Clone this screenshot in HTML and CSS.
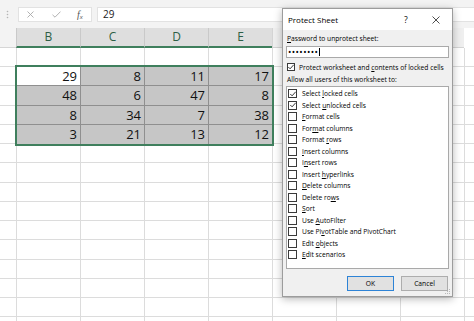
FILE: index.html
```html
<!DOCTYPE html>
<html lang="en">
  <head>
    <meta charset="UTF-8" />
    <title>Protect Sheet</title>
    <link rel="stylesheet" href="styles.css">
  </head>
  <body>
    <main class="excel">
      <!-- formula bar -->
      <div class="formula-bar">
        <span class="grip">
          <svg width="3" height="9" viewBox="0 0 3 9"><circle cx="1.5" cy="1.5" r="0.8" fill="#b5b5b5"/><circle cx="1.5" cy="4.5" r="0.8" fill="#b5b5b5"/><circle cx="1.5" cy="7.5" r="0.8" fill="#b5b5b5"/></svg>
        </span>
        <div class="fx-box">
          <svg class="fx-cancel" width="7" height="7" viewBox="0 0 7 7"><path d="M0.5 0.5 L6.5 6.5 M6.5 0.5 L0.5 6.5" stroke="#a9a9a9" stroke-width="0.9" fill="none"/></svg>
          <svg class="fx-enter" width="9" height="7" viewBox="0 0 9 7"><path d="M0.5 3.8 L3 6.2 L8.5 0.6" stroke="#a9a9a9" stroke-width="0.9" fill="none"/></svg>
          <span class="fx-label"><i>f</i><span class="fx-x">x</span></span>
        </div>
        <div class="formula-input">29</div>
      </div>

      <!-- column headers -->
      <div class="col-heads">
        <div class="corner"></div>
        <div class="col-head selected">B</div>
        <div class="col-head selected">C</div>
        <div class="col-head selected">D</div>
        <div class="col-head selected">E</div>
        <div class="col-head">F</div>
        <div class="col-head">G</div>
        <div class="col-head">H</div>
      </div>

      <!-- cells -->
      <div class="cells">
        <div class="selection">
          <div class="cell active">29</div>
          <div class="cell">8</div>
          <div class="cell">11</div>
          <div class="cell">17</div>
          <div class="cell">48</div>
          <div class="cell">6</div>
          <div class="cell">47</div>
          <div class="cell">8</div>
          <div class="cell">8</div>
          <div class="cell">34</div>
          <div class="cell">7</div>
          <div class="cell">38</div>
          <div class="cell">3</div>
          <div class="cell">21</div>
          <div class="cell">13</div>
          <div class="cell">12</div>
        </div>
      </div>
    </main>

    <section class="dialog" role="dialog" aria-label="Protect Sheet">
      <div class="dialog-title">
        <span class="title-text">Protect Sheet</span>
        <span class="title-help">?</span>
        <svg class="title-close" width="8" height="8" viewBox="0 0 8 8"><path d="M0.5 0.5 L7.5 7.5 M7.5 0.5 L0.5 7.5" stroke="#222" stroke-width="0.8" fill="none"/></svg>
      </div>
      <div class="dialog-body">
        <div class="field-label"><u>P</u>assword to unprotect sheet:</div>
        <div class="password"><span class="dots">••••••••</span><span class="caret"></span></div>
        <label class="check-row">
          <span class="box checked"><svg width="8" height="8" viewBox="0 0 8 8"><path d="M1.3 4 L3.1 5.8 L6.7 1.8" stroke="#222" stroke-width="0.9" fill="none"/></svg></span>
          <span>Protect worksheet and <u>c</u>ontents of locked cells</span>
        </label>
        <div class="field-label allow">Allow all users of this worksheet to:</div>
        <ul class="perm-list">
          <li><span class="box checked"><svg width="8" height="8" viewBox="0 0 8 8"><path d="M1.3 4 L3.1 5.8 L6.7 1.8" stroke="#222" stroke-width="0.9" fill="none"/></svg></span><span>Select <u>l</u>ocked cells</span></li>
          <li><span class="box checked"><svg width="8" height="8" viewBox="0 0 8 8"><path d="M1.3 4 L3.1 5.8 L6.7 1.8" stroke="#222" stroke-width="0.9" fill="none"/></svg></span><span>Select <u>u</u>nlocked cells</span></li>
          <li><span class="box"></span><span><u>F</u>ormat cells</span></li>
          <li><span class="box"></span><span>For<u>m</u>at columns</span></li>
          <li><span class="box"></span><span>Format <u>r</u>ows</span></li>
          <li><span class="box"></span><span><u>I</u>nsert columns</span></li>
          <li><span class="box"></span><span>I<u>n</u>sert rows</span></li>
          <li><span class="box"></span><span>Insert <u>h</u>yperlinks</span></li>
          <li><span class="box"></span><span><u>D</u>elete columns</span></li>
          <li><span class="box"></span><span>Delete ro<u>w</u>s</span></li>
          <li><span class="box"></span><span><u>S</u>ort</span></li>
          <li><span class="box"></span><span>Use <u>A</u>utoFilter</span></li>
          <li><span class="box"></span><span>Use Pi<u>v</u>otTable and PivotChart</span></li>
          <li><span class="box"></span><span>Edit <u>o</u>bjects</span></li>
          <li><span class="box"></span><span><u>E</u>dit scenarios</span></li>
        </ul>
        <div class="buttons">
          <button class="btn default">OK</button>
          <button class="btn">Cancel</button>
        </div>
      </div>
      <svg class="size-grip" width="6" height="6" viewBox="0 0 6 6"><g fill="#b8b8b8"><rect x="4" y="0" width="1" height="1"/><rect x="2" y="2" width="1" height="1"/><rect x="4" y="2" width="1" height="1"/><rect x="0" y="4" width="1" height="1"/><rect x="2" y="4" width="1" height="1"/><rect x="4" y="4" width="1" height="1"/></g></svg>
    </section>
  </body>
</html>
```

FILE: styles.css
```css
/* Reset */
* {
  margin: 0;
  padding: 0;
  box-sizing: border-box;
}

body {
  width: 474px;
  height: 321px;
  overflow: hidden;
  position: relative;
  background: #fff;
  font-family: "Open Sans", "Noto Sans", sans-serif;
  color: #111;
}

.excel {
  display: flex;
  flex-direction: column;
  height: 100%;
}

/* Formula bar */
.formula-bar {
  height: 28px;
  flex-shrink: 0;
  background: #f3f3f3;
  display: flex;
  align-items: flex-start;
  padding-top: 7px;
}

.grip {
  width: 18px;
  height: 15px;
  display: flex;
  align-items: center;
  padding-left: 6px;
}

.fx-box {
  width: 74px;
  height: 15px;
  background: #fff;
  border: 1px solid #e2e2e2;
  display: flex;
  align-items: center;
  padding-left: 8px;
}

.fx-enter {
  margin-left: 18px;
}

.fx-label {
  margin-left: 16px;
  font-family: "Liberation Serif", serif;
  font-size: 10px;
  color: #555;
  line-height: 1;
}

.fx-x {
  font-family: "Liberation Sans", sans-serif;
  font-size: 6px;
  font-style: italic;
  vertical-align: -1px;
}

.formula-input {
  flex: 1;
  height: 15px;
  margin-left: 5px;
  background: #fff;
  border: 1px solid #e2e2e2;
  border-right: none;
  padding-left: 5px;
  font-size: 10px;
  line-height: 13px;
  color: #222;
}

/* Column headers */
.col-heads {
  display: flex;
  height: 20px;
  flex-shrink: 0;
}

.corner {
  width: 16px;
  flex-shrink: 0;
  background: #f3f3f3;
  border-bottom: 1px solid #d6d6d6;
}

.col-head {
  width: 64px;
  flex-shrink: 0;
  background: #efefef;
  border-left: 1px solid #d4d4d4;
  border-bottom: 1px solid #d4d4d4;
  text-align: center;
  font-size: 12px;
  line-height: 19px;
  color: #444;
}

.col-head.selected {
  background: #dedede;
  border-left-color: #c9c9c9;
  border-bottom: 2px solid #3f7f5d;
  color: #2d5e45;
  line-height: 18px;
}

/* Cell grid */
.cells {
  flex: 1;
  background-image:
    repeating-linear-gradient(to bottom, transparent 0 18.25px, #dcdcdc 18.25px 19.25px),
    linear-gradient(to right, #dcdcdc 0 1px, transparent 1px);
  background-size: 100% 100%, 64px 100%;
  background-position: 0 0, 16px 0;
  background-repeat: no-repeat, repeat-x;
  padding: 17px 0 0 15px;
}

.selection {
  width: 259px;
  display: grid;
  grid-template-columns: 64px 64px 64px 63px;
  grid-auto-rows: 19.25px;
  border: 2px solid #3f7f5d;
  background: #c6c6c6;
}

.cell {
  border-right: 1px solid #8f8f8f;
  border-bottom: 1px solid #8f8f8f;
  text-align: right;
  padding-right: 3px;
  font-size: 13px;
  line-height: 19px;
  color: #111;
}

.cell:nth-child(4n) {
  border-right: none;
}

.cell:nth-last-child(-n + 4) {
  border-bottom: none;
}

.cell.active {
  background: #fff;
}

/* Dialog */
.dialog {
  position: absolute;
  left: 282px;
  top: 8px;
  width: 171px;
  height: 289px;
  background: #f0f0f0;
  border: 1px solid #9c9c9c;
  box-shadow: 0 2px 8px rgba(0, 0, 0, 0.28);
  display: flex;
  flex-direction: column;
  color: #000;
}

.dialog-title {
  height: 21px;
  background: #fff;
  display: flex;
  align-items: center;
  padding-left: 5px;
  font-size: 8px;
}

.title-text {
  flex: 1;
}

.title-help {
  width: 10px;
  font-size: 8.5px;
}

.title-close {
  margin: 0 12px 0 18px;
}

.dialog-body {
  flex: 1;
  display: flex;
  flex-direction: column;
  padding: 4px 3px 0 3px;
  font-size: 6.7px;
  white-space: nowrap;
}

.field-label {
  height: 10px;
  line-height: 10px;
  padding-left: 1px;
}

.password {
  height: 12px;
  margin-top: 2px;
  background: #fff;
  border: 1px solid #a9a9a9;
  padding-left: 1px;
  display: flex;
  align-items: center;
}

.dots {
  font-size: 9px;
  line-height: 8px;
  letter-spacing: 0.4px;
}

.caret {
  width: 1px;
  height: 8px;
  background: #000;
  margin-left: 1px;
}

.check-row {
  height: 10px;
  margin-top: 4px;
  display: flex;
  align-items: center;
  gap: 4px;
  padding-left: 1px;
}

.box {
  width: 8px;
  height: 8px;
  flex-shrink: 0;
  background: #fff;
  border: 1px solid #3a3a3a;
  display: flex;
  align-items: center;
  justify-content: center;
}

.box svg {
  flex-shrink: 0;
}

.field-label.allow {
  margin-top: 3px;
}

.perm-list {
  list-style: none;
  height: 183px;
  margin-top: 1px;
  background: #fff;
  border: 1px solid #a9a9a9;
  padding: 1px 0 0 1px;
}

.perm-list li {
  height: 11.5px;
  display: flex;
  align-items: center;
  gap: 5px;
}

.perm-list .box {
  width: 9px;
  height: 9px;
}

.buttons {
  display: flex;
  justify-content: flex-end;
  gap: 7px;
  margin-top: 7px;
  padding-right: 1px;
}

.btn {
  width: 47px;
  height: 15px;
  background: #e1e1e1;
  border: 1px solid #adadad;
  font-family: inherit;
  font-size: 6.7px;
  color: #000;
}

.btn.default {
  border-color: #2d83d6;
}

.size-grip {
  position: absolute;
  right: 1px;
  bottom: 1px;
}
```
